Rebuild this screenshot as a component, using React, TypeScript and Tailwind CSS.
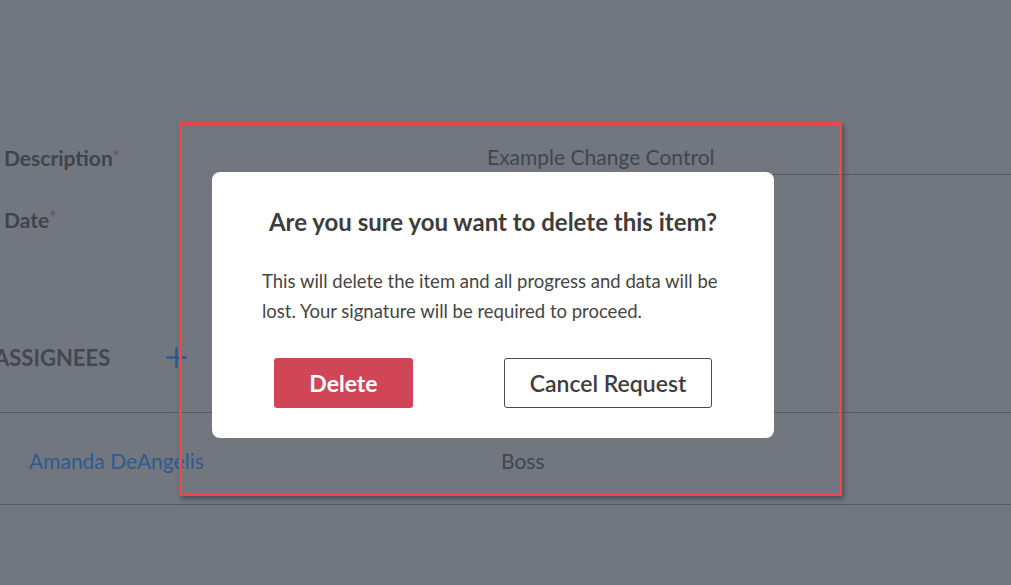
import { Plus } from "lucide-react";

export default function App() {
  return (
    <div
      className="relative h-[585px] w-[1011px] overflow-hidden bg-[#72777f]"
      style={{ fontFamily: "Lato, 'Open Sans', sans-serif" }}
    >
      {/* background form, dimmed */}
      <div className="pt-[140px]">
        <div className="flex h-[35px] items-center">
          <div className="w-[487px] pl-[4px] text-[21px] font-bold text-[#3f444b]">
            Description<span className="relative -top-[3px] text-[17px] font-normal text-[#6e4d5a]">*</span>
          </div>
          <div className="flex h-full flex-1 items-center border-b border-[#555a61] text-[21px] text-[#41464d]">
            Example Change Control
          </div>
        </div>
        <div className="mt-[29px] flex h-[32px] items-center pl-[4px] text-[21px] font-bold text-[#3f444b]">
          Date<span className="relative -top-[3px] text-[17px] font-normal text-[#6e4d5a]">*</span>
        </div>

        <div className="mt-[104px] flex h-[34px] items-center">
          <div className="-ml-[6px] w-[167px] text-[22px] font-bold text-[#43484f]">
            ASSIGNEES
          </div>
          <Plus size={31} strokeWidth={2} className="text-[#2c5a8f]" />
        </div>

        <div className="mt-[38px] flex h-[93px] items-center border-y border-[#565b62] pt-[4px]">
          <div className="w-[501px] pl-[29px] text-[21px] text-[#2f5a8e]">
            Amanda DeAngelis
          </div>
          <div className="text-[21px] text-[#41464d]">Boss</div>
        </div>
      </div>

      {/* red annotation frame */}
      <div className="absolute left-[179px] top-[122px] h-[374px] w-[663px] border-[3px] border-[#f2454b] shadow-[2px_3px_5px_rgba(0,0,0,0.35)]" />

      {/* modal */}
      <div className="absolute left-[212px] top-[172px] flex h-[266px] w-[562px] flex-col rounded-[8px] bg-white px-[50px] pt-[34px]">
        <h2 className="text-center text-[24px] font-bold leading-[32px] text-[#3d3d3d]">
          Are you sure you want to delete this item?
        </h2>
        <p className="mt-[28px] text-[18.5px] leading-[30px] text-[#454545]">
          This will delete the item and all progress and data will be lost. Your signature will be required to proceed.
        </p>
        <div className="mt-[32px] flex items-center justify-between px-[12px]">
          <button className="h-[50px] w-[139px] rounded-[3px] bg-[#d14657] text-[23px] font-bold text-white">
            Delete
          </button>
          <button className="h-[50px] w-[208px] rounded-[3px] border border-[#4a4a4a] bg-white text-[23px] font-semibold text-[#3d3d3d]">
            Cancel Request
          </button>
        </div>
      </div>
    </div>
  );
}
